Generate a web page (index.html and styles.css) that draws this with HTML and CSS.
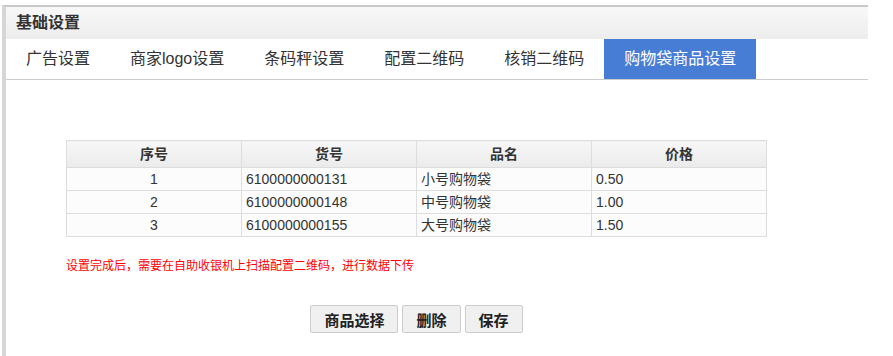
FILE: index.html
```html
<!DOCTYPE html>
<html lang="zh">
<head>
<meta charset="utf-8">
<title>基础设置</title>
<link rel="stylesheet" href="styles.css">
</head>
<body>
<div class="panel">
  <div class="panel-header">基础设置</div>
  <div class="tabs">
    <div class="tab">广告设置</div>
    <div class="tab">商家logo设置</div>
    <div class="tab">条码秤设置</div>
    <div class="tab">配置二维码</div>
    <div class="tab">核销二维码</div>
    <div class="tab active">购物袋商品设置</div>
  </div>
  <div class="content">
    <table class="grid">
      <thead>
        <tr><th>序号</th><th>货号</th><th>品名</th><th>价格</th></tr>
      </thead>
      <tbody>
        <tr><td class="c">1</td><td>6100000000131</td><td>小号购物袋</td><td>0.50</td></tr>
        <tr><td class="c">2</td><td>6100000000148</td><td>中号购物袋</td><td>1.00</td></tr>
        <tr><td class="c">3</td><td>6100000000155</td><td>大号购物袋</td><td>1.50</td></tr>
      </tbody>
    </table>
    <p class="note">设置完成后，需要在自助收银机上扫描配置二维码，进行数据下传</p>
    <div class="actions">
      <button class="btn">商品选择</button>
      <button class="btn">删除</button>
      <button class="btn">保存</button>
    </div>
  </div>
</div>
</body>
</html>
```
FILE: styles.css
```css
html, body {
  margin: 0;
  padding: 0;
  background: #fff;
}
body {
  padding-top: 5px;
  font-family: "Liberation Sans", "Noto Sans CJK SC", Arial, sans-serif;
  color: #333;
}
.panel {
  margin-left: 2px;
  width: 862px;
  height: 351px;
  border-top: 2px solid #c8c8c8;
  border-left: 4px solid #d6d6d6;
  box-sizing: content-box;
}
.panel-header {
  height: 32px;
  line-height: 32px;
  padding-left: 10px;
  font-size: 16px;
  font-weight: bold;
  color: #333;
  background: linear-gradient(#f8f8f8, #ededed);
}
.tabs {
  display: flex;
  height: 40px;
  border-bottom: 1px solid #cccccc;
}
.tab {
  padding: 0 20px;
  line-height: 40px;
  font-size: 16px;
  color: #333;
  white-space: nowrap;
}
.tab.active {
  background: #477dd4;
  color: #fff;
}
.content {
  padding-left: 60px;
  padding-top: 60px;
}
.grid {
  width: 701px;
  border-collapse: collapse;
  table-layout: fixed;
  font-size: 14px;
}
.grid th, .grid td {
  border: 1px solid #dddddd;
  padding: 0 4px;
  text-align: left;
  white-space: nowrap;
  vertical-align: middle;
}
.grid th {
  height: 26px;
  line-height: 26px;
  text-align: center;
  font-weight: bold;
  color: #333;
  background: linear-gradient(#f7f7f7, #ebebeb);
}
.grid td {
  height: 22px;
  line-height: 22px;
  color: #333;
  background: #fcfcfc;
}
.grid td.c {
  text-align: center;
}
.note {
  margin: 21px 0 0 0;
  font-size: 12px;
  line-height: 16px;
  color: #ff0000;
}
.actions {
  width: 701px;
  display: flex;
  justify-content: center;
  gap: 4px;
  margin-top: 31px;
}
.btn {
  height: 28px;
  padding: 0 13px;
  font-family: "Liberation Sans", "Noto Sans CJK SC", sans-serif;
  font-size: 15px;
  font-weight: bold;
  color: #222;
  background: #f0f0f0;
  border: 1px solid #cccccc;
  border-radius: 2px;
}
```
